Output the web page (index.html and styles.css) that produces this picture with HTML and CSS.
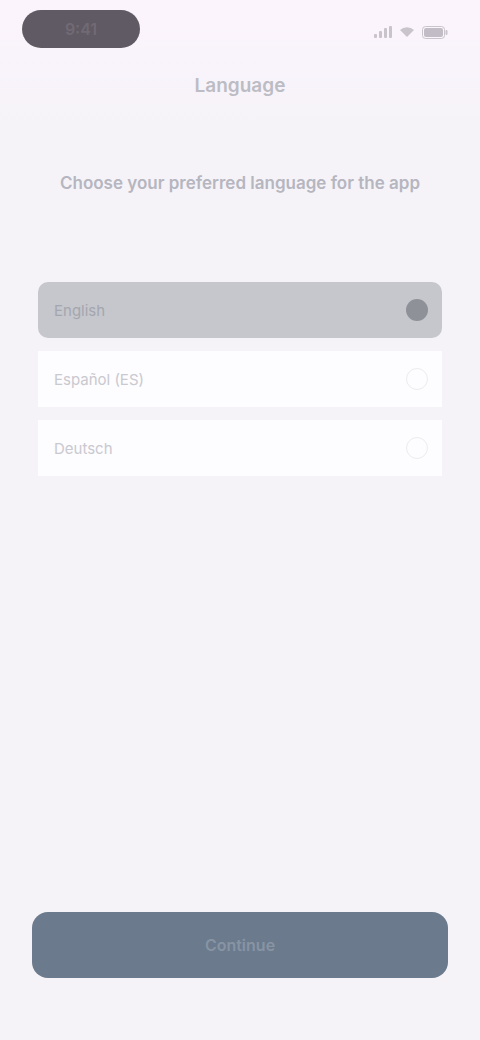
FILE: index.html
```html
<!DOCTYPE html>
<html>
<head>
<meta charset="utf-8">
<link rel="stylesheet" href="styles.css">
</head>
<body>
<div class="screen">
  <div class="status">
    <div class="time">9:41</div>
    <div class="icons">
      <svg width="18" height="12" viewBox="0 0 18 12"><rect x="0" y="8" width="3" height="4" rx="1" fill="#c9c3cc"/><rect x="5" y="5" width="3" height="7" rx="1" fill="#c9c3cc"/><rect x="10" y="2" width="3" height="10" rx="1" fill="#c9c3cc"/><rect x="15" y="0" width="3" height="12" rx="1" fill="#c9c3cc"/></svg>
      <svg width="16" height="12" viewBox="0 0 16 12"><path d="M8 11 L1 4 A10 10 0 0 1 15 4 Z" fill="#c9c3cc"/></svg>
      <svg width="26" height="13" viewBox="0 0 26 13"><rect x="0.5" y="0.5" width="22" height="12" rx="3" fill="none" stroke="#c9c3cc"/><rect x="2" y="2" width="19" height="9" rx="2" fill="#c2bcc6"/><rect x="23.5" y="4" width="2" height="5" rx="1" fill="#c9c3cc"/></svg>
    </div>
  </div>
  <h1 class="title">Language</h1>
  <p class="desc">Choose your preferred language for the app</p>
  <div class="list">
    <div class="row selected"><span>English</span><span class="radio on"></span></div>
    <div class="row"><span>Español (ES)</span><span class="radio"></span></div>
    <div class="row"><span>Deutsch</span><span class="radio"></span></div>
  </div>
  <div class="spacer"></div>
  <button class="cta">Continue</button>
</div>
</body>
</html>
```
FILE: styles.css
```css
* { box-sizing: border-box; }
html, body { margin: 0; padding: 0; }
body {
  width: 480px;
  height: 1040px;
  font-family: Inter, "Noto Sans", sans-serif;
  background: linear-gradient(#fcf4fd 0px, #f5f3f8 130px, #f5f3f8 100%);
  color: #2b2b33;
}
.screen {
  height: 1040px;
  display: flex;
  flex-direction: column;
  padding: 10px 30px 62px;
}
.status {
  display: flex;
  justify-content: space-between;
  align-items: center;
  margin: 0 -8px;
}
.time {
  background: #5f5a63;
  color: #716a74;
  width: 118px;
  height: 38px;
  border-radius: 19px;
  display: flex;
  align-items: center;
  justify-content: center;
  font-size: 16px;
  font-weight: 600;
}
.icons {
  display: flex;
  align-items: center;
  gap: 7px;
  padding-right: 10px;
  margin-top: 6px;
}
.title {
  margin: 26px 0 0;
  text-align: center;
  font-size: 19px;
  font-weight: 600;
  color: #bcbcc4;
}
.desc {
  margin: 76px 0 0;
  text-align: center;
  font-size: 17px;
  color: #b6b6c0;
  font-weight: 600;
}
.list {
  margin: 89px 8px 0;
  display: flex;
  flex-direction: column;
}
.row {
  height: 56px;
  display: flex;
  align-items: center;
  justify-content: space-between;
  padding: 0 14px 0 16px;
  font-size: 15px;
  color: #c9c9d0;
  background: #fdfcfe;
  margin-top: 13px;
}
.row.selected {
  background: #c5c7cd;
  border-radius: 10px;
  color: #a4a6ae;
  margin-top: 0;
}
.radio {
  width: 22px;
  height: 22px;
  border-radius: 50%;
  border: 1.5px solid #ececf0;
}
.radio.on {
  border: none;
  background: #8f9199;
}
.spacer { flex: 1; }
.cta {
  height: 66px;
  border: none;
  border-radius: 16px;
  background: #6b7a8c;
  color: #8794a4;
  font-family: inherit;
  font-size: 16px;
  font-weight: 600;
  margin: 0 2px;
}
```
